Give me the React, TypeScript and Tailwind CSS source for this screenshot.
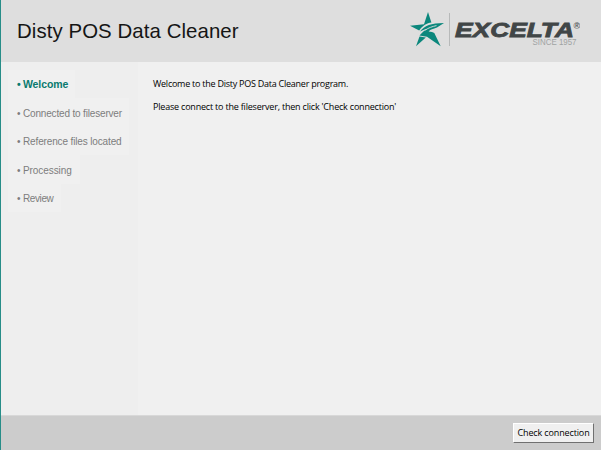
const steps = [
  { label: 'Welcome', box: 'w-[67px] h-[28px]', text: 'text-[10.5px] font-bold text-[#087a6e] tracking-[-0.1px] pt-[2px]' },
  { label: 'Connected to fileserver', box: 'w-[121px] h-[29px]', text: 'text-[10px] text-[#7d7d7d] tracking-[-0.17px] pt-[2px]' },
  { label: 'Reference files located', box: 'w-[121px] h-[28px]', text: 'text-[10px] text-[#7d7d7d] tracking-[-0.14px] pt-px' },
  { label: 'Processing', box: 'w-[72px] h-[29px]', text: 'text-[10px] text-[#7d7d7d] tracking-[-0.08px] pt-[2px]' },
  { label: 'Review', box: 'w-[53px] h-[28px]', text: 'text-[10px] text-[#7d7d7d] tracking-[-0.4px] pt-px' },
];

function Logo() {
  return (
    <svg width="180" height="50" viewBox="0 0 180 50" className="shrink-0">
      <g fill="#0b877c">
        <path d="M28 7 L31.4 17.6 C27 18.3 22.5 20.5 19.2 25.6 L10 20.8 L24 19.2 Z" />
        <path d="M44 18 L37 22.6 C33 24.5 30.5 24.2 28.6 26.4 L32 27 L34.3 28 L40.7 41.3 L27 31.8 L19.5 30.6 C22 27.4 24.5 25.5 28 23.8 L24.5 24.4 L20 26.6 C24.5 20.5 31 18.3 44 18 Z" />
        <path d="M19.5 31.4 L25.8 32.4 L16 41.3 Z" />
      </g>
      <path d="M25 25.2 C28.5 22.8 32 21.6 36.5 20.6" fill="none" stroke="#dedede" strokeWidth=".9" />
      <path d="M49.5 8V41" stroke="#b7b9b9" />
      <g fontFamily="Liberation Sans, sans-serif">
        <text x="55" y="31.7" fontSize="19.5" fontWeight="bold" fontStyle="italic" fill="#414647" stroke="#414647" strokeWidth=".8" textLength="119" lengthAdjust="spacingAndGlyphs">EXCELTA</text>
        <text x="173.5" y="24.2" fontSize="9" fontWeight="bold" fill="#55595a">®</text>
        <text x="132.5" y="39.7" fontSize="8.2" fill="#a0a3a3" textLength="44" lengthAdjust="spacingAndGlyphs">SINCE 1957</text>
      </g>
    </svg>
  );
}

export default function App() {
  return (
    <div className="flex h-[450px] w-[601px] flex-col overflow-hidden border-l border-[#278d88] bg-[#f0f0f0] font-['Liberation_Sans',sans-serif]">
      <header className="flex h-[62px] shrink-0 justify-between bg-[#dedede] pt-[5px] pr-[21px] pl-[16px]">
        <h1 className="pt-[10px] text-[20.4px] leading-[32px] tracking-[0.08px] whitespace-nowrap text-[#151515]">Disty POS Data Cleaner</h1>
        <Logo />
      </header>
      <div className="flex min-h-0 flex-1">
        <nav className="w-[137px] shrink-0 bg-[#eeeeee] pt-[8px] pl-[7px]">
          {steps.map((s) => (
            <div key={s.label} className={`flex items-center bg-[#f0f0f0] pl-[9px] whitespace-nowrap ${s.box} ${s.text}`}>
              <span className="w-[6px] shrink-0">•</span>
              <span>{s.label}</span>
            </div>
          ))}
        </nav>
        <main className="pt-[14px] pl-[15px] font-['Open_Sans',sans-serif] text-[9px] leading-[16px] whitespace-nowrap text-black">
          <p className="mb-[7px] tracking-[-0.25px]">Welcome to the Disty POS Data Cleaner program.</p>
          <p className="tracking-[-0.2px]">Please connect to the fileserver, then click 'Check connection'</p>
        </main>
      </div>
      <footer className="flex h-[35px] shrink-0 justify-end border-t border-[#d8d8d8] bg-[#cccccc] pt-[7px] pr-[7px]">
        <button className="h-[20px] w-[81px] border border-t-white border-r-[#707070] border-b-[#707070] border-l-white bg-[#f0f0f0] font-['Open_Sans',sans-serif] text-[9px] leading-[18px] tracking-[-0.13px] whitespace-nowrap text-black">Check connection</button>
      </footer>
    </div>
  );
}
